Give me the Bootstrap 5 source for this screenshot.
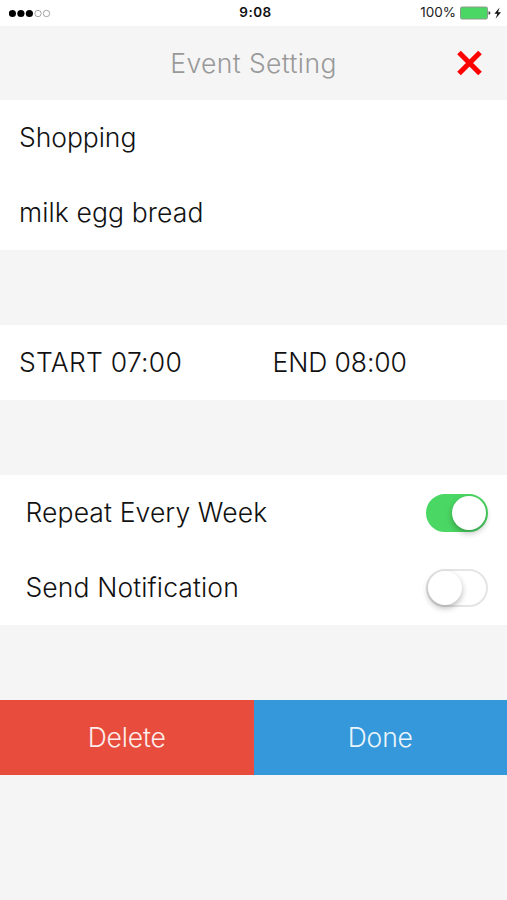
<!DOCTYPE html>
<html lang="en">
<head>
<meta charset="utf-8">
<meta name="viewport" content="width=device-width, initial-scale=1">
<title>Event Setting</title>
<link href="https://cdn.jsdelivr.net/npm/bootstrap@5.3.0/dist/css/bootstrap.min.css" rel="stylesheet">
<style>
body{background:#f5f5f5;color:#111;font-family:Inter,"Liberation Sans",sans-serif;font-weight:300;font-size:26.5px;line-height:1;height:900px;overflow:hidden}
.status{height:26px;font-size:13px;font-family:Inter,sans-serif;font-weight:400;padding:0 5px 0 9px;color:#222}
.percent{font-size:13.5px}
.clock{font-weight:600;font-size:13.5px;letter-spacing:.5px;color:#111}
.line{height:75px;white-space:nowrap}
.title{height:74px;color:#999}
.title span{letter-spacing:.4px}
.space{height:75px}
.inset{padding-left:19px}
.inset-wide{padding:0 19px 0 25.5px}
.name{letter-spacing:-.05px}
.note{letter-spacing:.12px}
.start{letter-spacing:.25px}
.end-time{letter-spacing:-.1px}
.option{letter-spacing:.12px}
.switch{width:62px;height:38px;border-radius:19px;border:2px solid #e5e5e5;background:#fff}
.switch i{display:block;width:34px;height:34px;border-radius:50%;background:#fff;box-shadow:0 3px 6px rgba(0,0,0,.28)}
.switch.on{background:#4bd763;border-color:#4bd763}
.switch.on i{margin-left:auto}
.action{border:0;border-radius:0;color:#fff;font-size:inherit;font-weight:300;line-height:1;height:75px;padding:0;letter-spacing:-.15px}
.delete{background:#e74c3c}.done{background:#3498db}
.action span{opacity:.9}
</style>
<script src="https://cdn.jsdelivr.net/npm/bootstrap@5.3.0/dist/js/bootstrap.bundle.min.js"></script>
</head>
<body>
<header class="status bg-white d-flex align-items-center">
  <div class="col d-flex"><svg width="42" height="9" viewBox="0 0 42 9"><g fill="#000"><circle cx="3.4" cy="4.5" r="3.6"/><circle cx="11.9" cy="4.5" r="3.6"/><circle cx="20.4" cy="4.5" r="3.6"/></g><g fill="#fff" stroke="#999" stroke-width=".9"><circle cx="29" cy="4.5" r="3.2"/><circle cx="37.5" cy="4.5" r="3.2"/></g></svg></div>
  <span class="clock">9:08</span>
  <div class="col d-flex justify-content-end align-items-center"><span class="percent me-1">100%</span>
  <svg width="42" height="14" viewBox="0 0 42 14"><rect x=".5" y="1" width="27" height="12" rx="1.5" fill="#4bd763" stroke="#8a9a8c"/><path d="M28.5 5.2q2 .3 2 1.8t-2 1.8z" fill="#444"/><path d="M39.6 1.4 34.4 7.8h3L35.6 12.8 41 6.3h-3z" fill="#111"/></svg></div>
</header>
<main>
  <div class="title d-flex align-items-center position-relative justify-content-center"><span>Event Setting</span>
    <button class="btn p-0 border-0 position-absolute end-0 me-4 d-flex" aria-label="Close"><svg width="28" height="28" viewBox="0 0 28 28"><path d="M4 3.5 25 24.5M25 3.5 4 24.5" stroke="red" stroke-width="5.2"/></svg></button></div>
  <section class="bg-white">
    <div class="line inset d-flex align-items-center"><span class="name">Shopping</span></div>
    <div class="line inset d-flex align-items-center"><span class="note">milk egg bread</span></div>
  </section>
  <div class="space"></div>
  <section class="line bg-white d-flex align-items-center">
    <div class="col-6 inset"><span class="start">START 07:00</span></div>
    <div class="col-6 inset"><span class="end-time">END 08:00</span></div>
  </section>
  <div class="space"></div>
  <section class="bg-white">
    <div class="line inset-wide d-flex align-items-center justify-content-between"><span class="option">Repeat Every Week</span><div class="switch on"><i></i></div></div>
    <div class="line inset-wide d-flex align-items-center justify-content-between"><span class="option">Send Notification</span><div class="switch"><i></i></div></div>
  </section>
  <div class="space"></div>
  <div class="d-flex"><button class="btn action delete col-6"><span>Delete</span></button><button class="btn action done col-6"><span>Done</span></button></div>
</main>
</body>
</html>
